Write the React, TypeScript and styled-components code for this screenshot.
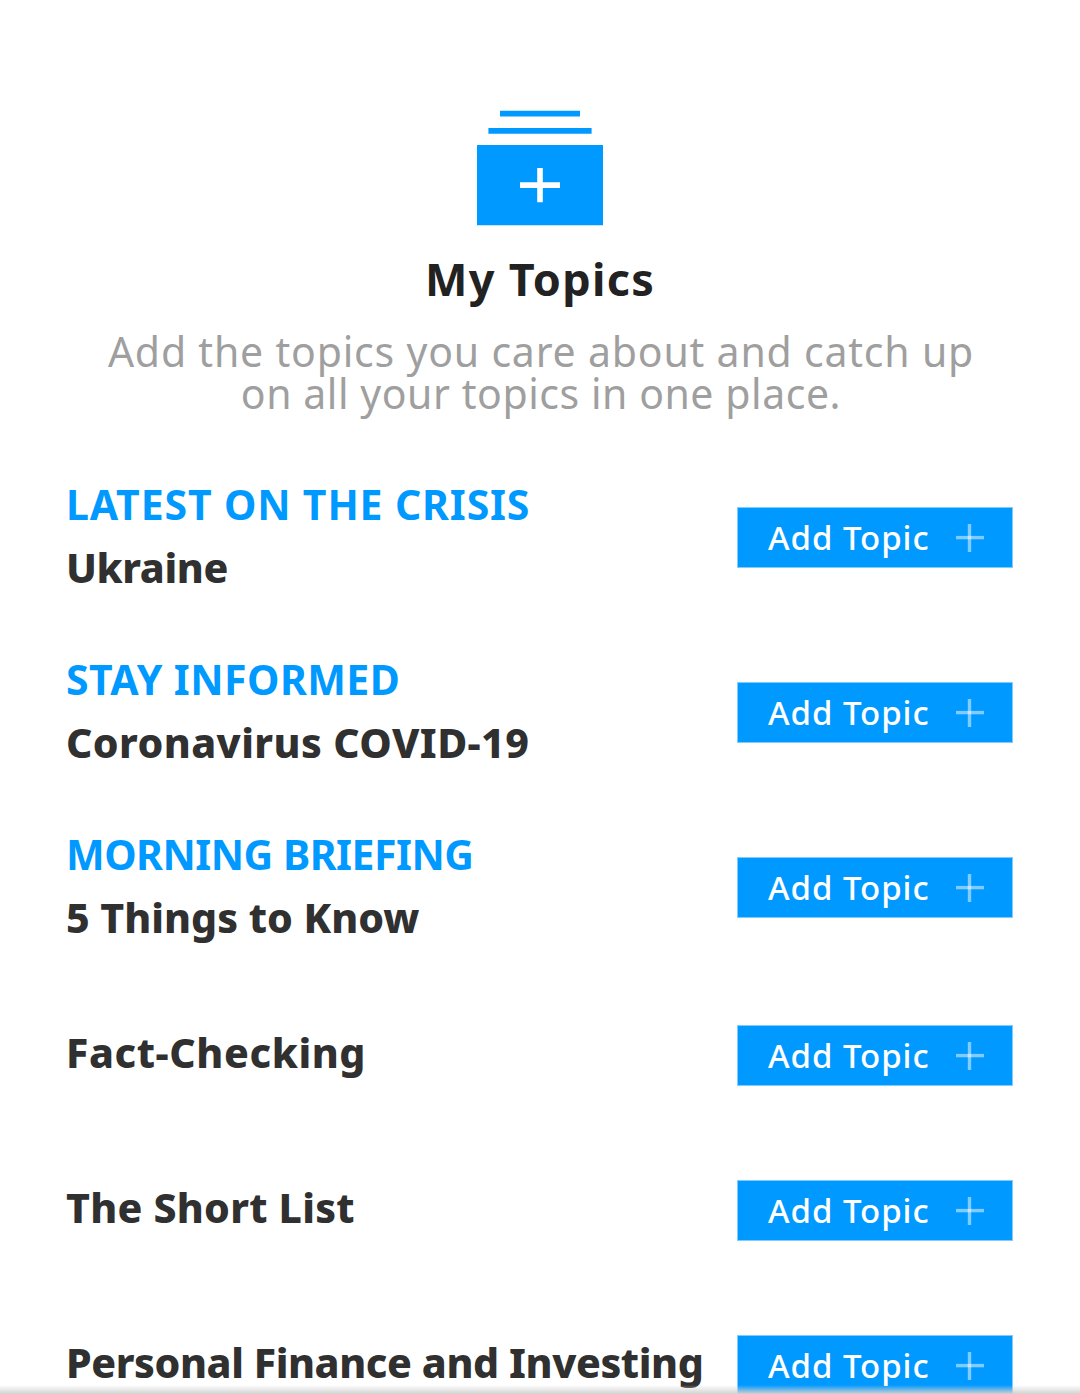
import React from "react";
import styled, { createGlobalStyle } from "styled-components";

const Global = createGlobalStyle`
  * { box-sizing: border-box; }
  html, body { margin: 0; background: #fff; }
  body { font-family: "Noto Sans", "Open Sans", sans-serif; overflow: hidden; }
`;

const Screen = styled.main`
  position: relative;
  width: 1080px;
  height: 1394px;
  overflow: hidden;
  padding-top: 110px;
  background: #fff;
`;

const Header = styled.header`
  display: flex;
  flex-direction: column;
  align-items: center;
  height: 340px;
`;

const StackIcon = styled.svg`
  display: block;
  flex: none;
  width: 126px;
  height: 116px;
`;

const Title = styled.h1`
  margin: 25px 0 0;
  font-size: 45px;
  line-height: 56px;
  font-weight: 700;
  letter-spacing: 1.3px;
  color: #222;
`;

const Intro = styled.p`
  display: flex;
  flex-direction: column;
  align-items: center;
  margin: 23px 0 0;
  padding-left: 2px;
  font-size: 41px;
  line-height: 42px;
  color: #9f9f9f;
`;

const IntroLine = styled.span<{ $tracking: number }>`
  letter-spacing: ${(p) => p.$tracking}px;
  white-space: nowrap;
`;

const List = styled.ul`
  list-style: none;
  margin: 0;
  padding: 0 67px 0 66px;
`;

const Labels = styled.div<{ $tall: boolean }>`
  display: flex;
  flex-direction: column;
  padding-bottom: ${(p) => (p.$tall ? 3 : 7)}px;
  white-space: nowrap;
`;

const Row = styled.li<{ $tall: boolean }>`
  display: flex;
  align-items: center;
  justify-content: space-between;
  height: ${(p) => (p.$tall ? 175 : 155)}px;

  &:nth-child(4) {
    margin-top: 3px;
  }
`;

const Kicker = styled.span<{ $tracking: number }>`
  font-size: 41px;
  line-height: 63px;
  font-weight: 700;
  letter-spacing: ${(p) => p.$tracking}px;
  color: #0099ff;
`;

const Name = styled.span<{ $tracking: number }>`
  font-size: 41px;
  line-height: 63px;
  font-weight: 800;
  letter-spacing: ${(p) => p.$tracking}px;
  color: #303030;
`;

const AddButton = styled.button`
  display: flex;
  align-items: center;
  justify-content: space-between;
  flex: none;
  width: 276px;
  height: 61px;
  padding: 0 28px 0 30px;
  border: 1px solid #80ccff;
  background: #0099ff;
  color: #fff;
  font: 500 33px/58px "Noto Sans", sans-serif;
  letter-spacing: 0.95px;
`;

const Plus = styled.svg`
  display: block;
  width: 28px;
  height: 28px;
`;

const BottomShade = styled.div`
  position: absolute;
  inset: auto 0 0;
  height: 9px;
  background: linear-gradient(rgba(210, 210, 210, 0), #d2d2d2);
`;

interface Topic {
  name: string;
  tracking: number;
  kicker?: string;
  kickerTracking?: number;
}

const topics: Topic[] = [
  { kicker: "LATEST ON THE CRISIS", kickerTracking: 0.85, name: "Ukraine", tracking: -0.4 },
  { kicker: "STAY INFORMED", kickerTracking: 0.45, name: "Coronavirus COVID-19", tracking: 0.42 },
  { kicker: "MORNING BRIEFING", kickerTracking: -0.5, name: "5 Things to Know", tracking: 0 },
  { name: "Fact-Checking", tracking: 0.6 },
  { name: "The Short List", tracking: 0.25 },
  { name: "Personal Finance and Investing", tracking: -0.4 },
];

export default function App() {
  return (
    <Screen>
      <Global />
      <Header>
        <StackIcon viewBox="0 0 126 116">
          <path
            fill="#0099ff"
            d="M23 .8h80v5.700H23zM11.400 18h103.200v5.700H11.400zM0 35h126v80.200H0z"
          />
          <path
            fill="#fff"
            d="M60.200 58h5.600v14.200H83V78H65.800v14.300h-5.600V78H43v-5.800h17.200z"
          />
        </StackIcon>
        <Title>My Topics</Title>
        <Intro>
          <IntroLine $tracking={0.8}>Add the topics you care about and catch up</IntroLine>
          <IntroLine $tracking={0.55}>on all your topics in one place.</IntroLine>
        </Intro>
      </Header>
      <List>
        {topics.map((t) => (
          <Row key={t.name} $tall={!!t.kicker}>
            <Labels $tall={!!t.kicker}>
              {t.kicker && <Kicker $tracking={t.kickerTracking ?? 0}>{t.kicker}</Kicker>}
              <Name $tracking={t.tracking}>{t.name}</Name>
            </Labels>
            <AddButton>
              <span>Add Topic</span>
              <Plus viewBox="0 0 28 28">
                <path stroke="#fff" strokeOpacity=".5" strokeWidth="3.4" d="M13.500 0v28" />
                <path stroke="#fff" strokeOpacity=".5" strokeWidth="3.4" d="M0 13.600h28" />
              </Plus>
            </AddButton>
          </Row>
        ))}
      </List>
      <BottomShade />
    </Screen>
  );
}
